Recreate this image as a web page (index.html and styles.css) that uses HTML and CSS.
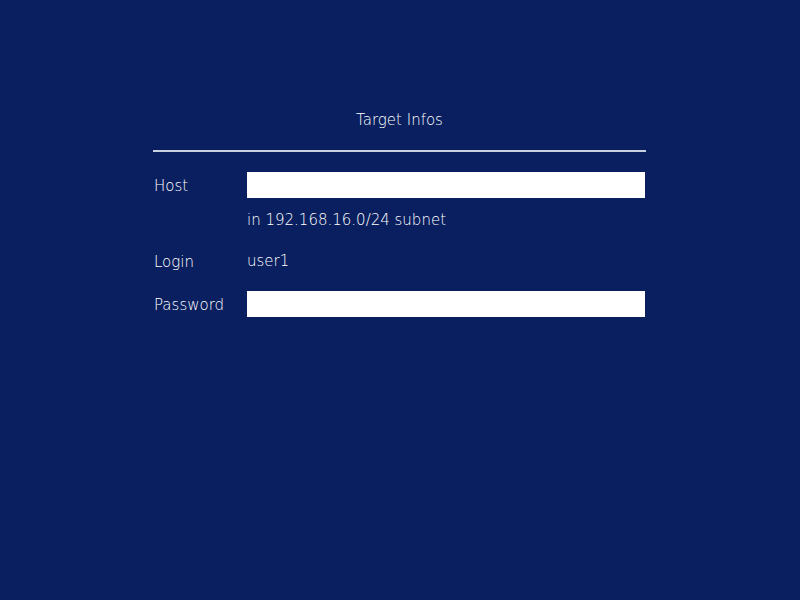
FILE: index.html
```html
<!DOCTYPE html>
<html>
<head>
<meta charset="utf-8">
<link rel="stylesheet" href="styles.css">
</head>
<body>
<div class="panel">
  <div class="title">Target Infos</div>
  <div class="rule"></div>
  <div class="form">
    <div class="label">Host</div>
    <div class="field"><input class="input" type="text"></div>
    <div class="label"></div>
    <div class="hint">in 192.168.16.0/24 subnet</div>
    <div class="label login">Login</div>
    <div class="value">user1</div>
    <div class="label">Password</div>
    <div class="field"><input class="input" type="password"></div>
  </div>
</div>
</body>
</html>
```
FILE: styles.css
```css
html, body {
  margin: 0;
  padding: 0;
  height: 100%;
  background: #0a1f5f;
}
body {
  font-family: "DejaVu Sans", "Open Sans", sans-serif;
  font-weight: 200;
  color: #ffffff;
  font-size: 15px;
}
.panel {
  width: 494px;
  margin: 0 auto;
  padding-top: 109px;
}
.title {
  text-align: center;
  height: 22px;
  line-height: 22px;
  padding-right: 1px;
}
.rule {
  margin-top: 19px;
  margin-right: 1px;
  height: 2px;
  background: #c9d0e0;
}
.form {
  margin-top: 20px;
  display: grid;
  grid-template-columns: 94px 398px;
  grid-template-rows: 26px 42px 51px 26px;
}
.label {
  padding-left: 1px;
  padding-top: 1px;
  line-height: 26px;
}
.login, .value {
  line-height: 42px;
}
.field {
  height: 26px;
  display: flex;
}
.input {
  width: 100%;
  height: 26px;
  border: 0;
  margin: 0;
  padding: 0 6px;
  box-sizing: border-box;
  background: #ffffff;
  outline: none;
}
.hint {
  padding-top: 1px;
  line-height: 42px;
}
```
